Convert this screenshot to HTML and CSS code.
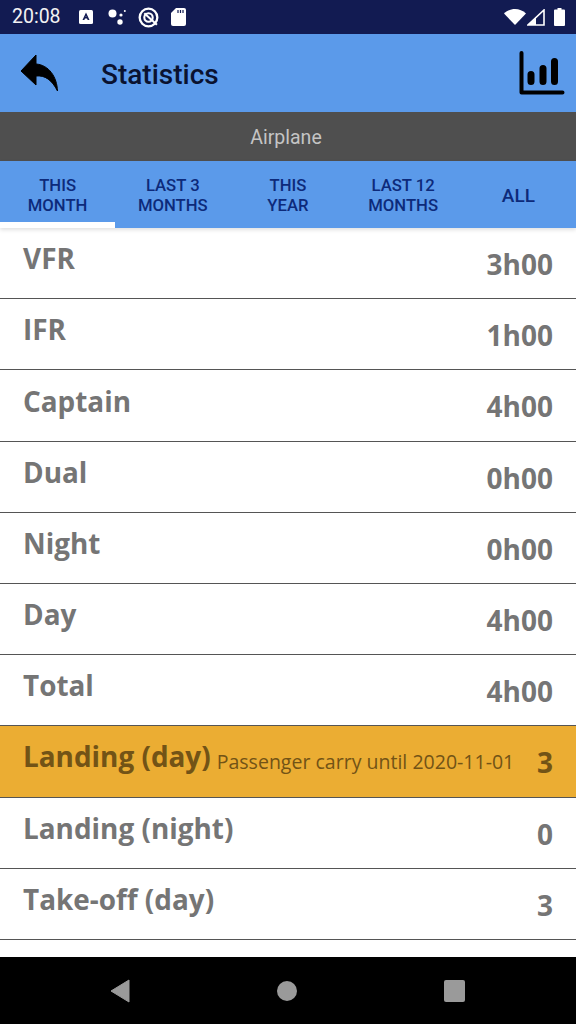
FILE: index.html
```html
<!DOCTYPE html>
<html lang="en">
<head>
<meta charset="utf-8">
<title>Statistics</title>
<link rel="stylesheet" href="styles.css">
</head>
<body>
<div class="screen">
  <div class="status">
    <span class="time">20:08</span>
    <svg class="st-a" viewBox="0 0 14 14"><rect x="0" y="0" width="14" height="14" rx="1.5" fill="#fff"/><path d="M7 2.5 L10.5 10 H8.7 L8 8.4 H6 L5.3 10 H3.5 Z M6.6 7 H7.4 L7 6 Z" fill="#121b52" fill-rule="evenodd"/></svg>
    <svg class="st-dots" viewBox="0 0 18 16"><circle cx="4.5" cy="4.5" r="4" fill="#fff"/><circle cx="12" cy="13" r="2.7" fill="#fff"/><circle cx="13" cy="6" r="1.6" fill="#fff"/><circle cx="16.8" cy="2" r="1" fill="#fff"/></svg>
    <svg class="st-q" viewBox="0 0 20 20"><circle cx="10" cy="10" r="8.4" fill="none" stroke="#fff" stroke-width="2.2"/><circle cx="10" cy="10" r="4" fill="none" stroke="#fff" stroke-width="2"/><path d="M6 6 L18 17" stroke="#fff" stroke-width="2"/></svg>
    <svg class="st-sd" viewBox="0 0 15 18"><path d="M5 0 H13 A2 2 0 0 1 15 2 V16 A2 2 0 0 1 13 18 H2 A2 2 0 0 1 0 16 V5 Z" fill="#fff"/><path d="M7 2 V5 M9.5 2 V5 M12 2 V5" stroke="#121b52" stroke-width="1.2"/></svg>
    <span class="spacer"></span>
    <svg class="st-wifi" viewBox="0 0 22 16"><path d="M0 4.5 C6 -1.5 16 -1.5 22 4.5 L11 16 Z" fill="#fff"/></svg>
    <svg class="st-sig" viewBox="0 0 18 17"><path d="M17 1 V16 H1 Z" fill="none" stroke="#fff" stroke-width="1.6"/><path d="M1 16 L9 8 V16 Z" fill="#fff"/></svg>
    <svg class="st-bat" viewBox="0 0 11 18"><path d="M3.5 0 H7.5 V1.5 H10 A1 1 0 0 1 11 2.5 V17 A1 1 0 0 1 10 18 H1 A1 1 0 0 1 0 17 V2.5 A1 1 0 0 1 1 1.5 H3.5 Z" fill="#fff"/></svg>
  </div>
  <header class="appbar">
    <svg class="back" viewBox="0 0 38 38"><path d="M15 1 L0 17 L15 31 L15 22 C24 21 31 26 36.500 37 C36 23 28 11 15 10 Z" fill="#000" stroke="#000" stroke-linejoin="round" stroke-width="1"/></svg>
    <h1 class="title">Statistics</h1>
    <svg class="chart" viewBox="0 0 46 46"><path d="M2.500 3 V42.500 H43.500" fill="none" stroke="#000" stroke-width="4" stroke-linecap="round" stroke-linejoin="round"/><path d="M12 24.500 V31.500 M24 18.500 V31.500 M35.500 11.500 V31.500" fill="none" stroke="#000" stroke-width="7" stroke-linecap="round"/></svg>
  </header>
  <div class="subbar">Airplane</div>
  <nav class="tabs">
    <div class="tab active">THIS<br>MONTH</div>
    <div class="tab">LAST 3<br>MONTHS</div>
    <div class="tab">THIS<br>YEAR</div>
    <div class="tab">LAST 12<br>MONTHS</div>
    <div class="tab tab-large">ALL</div>
  </nav>
  <main class="list">
    <div class="row"><span class="label">VFR</span><span class="value">3h00</span></div>
    <div class="row"><span class="label">IFR</span><span class="value">1h00</span></div>
    <div class="row"><span class="label">Captain</span><span class="value">4h00</span></div>
    <div class="row"><span class="label">Dual</span><span class="value">0h00</span></div>
    <div class="row"><span class="label">Night</span><span class="value">0h00</span></div>
    <div class="row"><span class="label">Day</span><span class="value">4h00</span></div>
    <div class="row"><span class="label">Total</span><span class="value">4h00</span></div>
    <div class="row warn"><span class="label">Landing (day)</span><span class="note">Passenger carry until 2020-11-01</span><span class="value">3</span></div>
    <div class="row"><span class="label">Landing (night)</span><span class="value">0</span></div>
    <div class="row"><span class="label">Take-off (day)</span><span class="value">3</span></div>
  </main>
  <footer class="navbar">
    <svg class="nav-back" viewBox="0 0 20 24"><path d="M19 1 V23 L1 12 Z" fill="#9a9a9a" stroke="#9a9a9a" stroke-linejoin="round"/></svg>
    <span class="nav-home"></span>
    <span class="nav-recent"></span>
  </footer>
</div>
</body>
</html>
```
FILE: styles.css
```css
* { box-sizing: border-box; }
html, body { margin: 0; padding: 0; }
body { width: 576px; height: 1024px; overflow: hidden; background: #fff; }
.screen { display: flex; flex-direction: column; width: 576px; height: 1024px; }

.status { flex: 0 0 34px; height: 34px; background: #121b52; display: flex; align-items: center; padding: 0 11px 0 12px; color: #fff; }
.time { font: 400 19.500px/1 Roboto, sans-serif; color: #f2f2f2; margin-right: 18px; }
.st-a { width: 14px; height: 14px; margin-right: 15px; }
.st-dots { width: 18px; height: 16px; margin-right: 12px; }
.st-q { width: 21px; height: 21px; margin-right: 12px; }
.st-sd { width: 15px; height: 18px; }
.spacer { flex: 1; }
.st-wifi { width: 22px; height: 16px; margin-right: 1px; }
.st-sig { width: 18px; height: 17px; margin-right: 9px; }
.st-bat { width: 11px; height: 18px; }

.appbar { flex: 0 0 78px; height: 78px; background: #5b9aea; display: flex; align-items: center; padding: 0 11px 0 21px; }
.back { width: 38px; height: 38px; margin-right: 42px; }
.title { margin: 0; padding-top: 3px; flex: 1; font: 500 28px/1 Roboto, sans-serif; color: #0a1230; }
.chart { width: 46px; height: 46px; }

.subbar { flex: 0 0 49px; height: 49px; background: #4f4f4f; color: #c4c4c4; display: flex; align-items: center; justify-content: center; padding: 2px 4px 0 0; font: 400 19.500px/1 Roboto, sans-serif; }

.tabs { flex: 0 0 67px; height: 67px; background: #5b9aea; display: grid; grid-template-columns: repeat(5, 115.200px); box-shadow: 0 2px 4px rgba(0,0,0,.12); position: relative; }
.tab { display: flex; align-items: center; justify-content: center; text-align: center; font: 500 16.700px/20px Roboto, sans-serif; color: #0d2a7a; border-bottom: 6px solid transparent; padding-top: 8px; }
.tab.active { border-bottom-color: #fff; }
.tab-large { font-size: 19px; }

.list { flex: 1; min-height: 0; overflow: hidden; background: #fff; }
.row { height: 71.200px; border-bottom: 1.500px solid #555; display: flex; align-items: center; padding: 0 23px; color: #757575; font-family: "Open Sans", sans-serif; font-weight: 600; }
.label { font-size: 27.900px; line-height: 1; font-weight: 700; position: relative; top: -4px; }
.value { margin-left: auto; font-size: 28px; line-height: 1; font-weight: 700; position: relative; top: 1px; }
.note { font-size: 19.550px; font-weight: 400; margin-left: 6px; position: relative; top: 0; }
.row.warn { background: #ebad33; color: #725316; }

.navbar { flex: 0 0 67px; height: 67px; background: #000; display: flex; align-items: center; padding: 0 111px 0 110px; justify-content: space-between; }
.nav-back { width: 20px; height: 24px; }
.nav-home { width: 20px; height: 20px; border-radius: 50%; background: #9a9a9a; }
.nav-recent { width: 21px; height: 22px; border-radius: 2px; background: #9a9a9a; }
```
